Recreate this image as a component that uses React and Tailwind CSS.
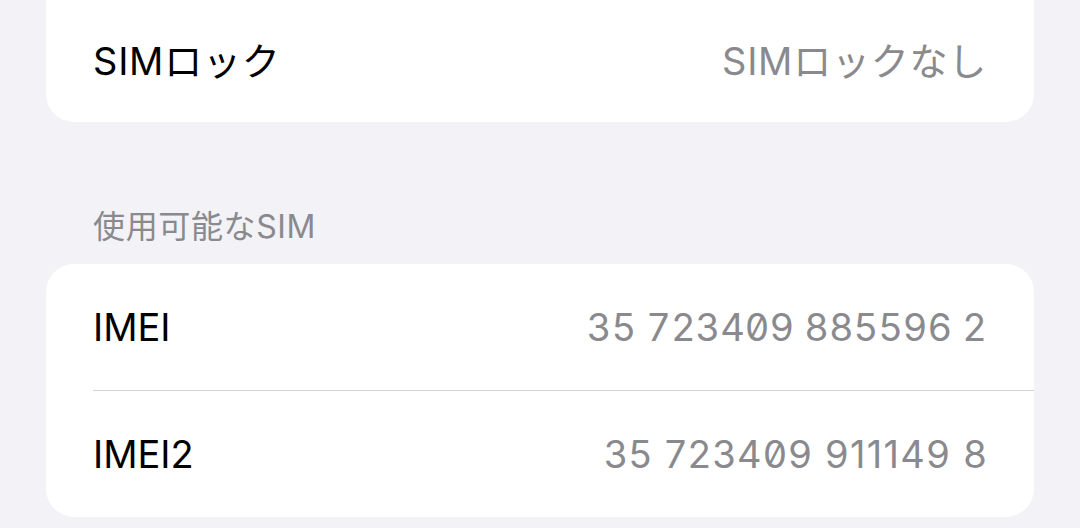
export default function App() {
  const font = "font-['Inter','Noto_Sans_CJK_JP',sans-serif]"
  return (
    <div className={`w-[1080px] h-[528px] overflow-hidden bg-[#f2f2f7] ${font}`}>
      <div className="mx-[46px] h-[122px] bg-white rounded-b-[28px] flex items-center justify-between px-[47px]">
        <span className="text-[38px] text-black tracking-[0.02em]">SIMロック</span>
        <span className="text-[38px] text-[#8a8a8e] tracking-[0.02em]">SIMロックなし</span>
      </div>
      <div className="pl-[93px] pt-[86px] pb-[18px] text-[32px] leading-[38px] text-[#8a8a8e] tracking-[0.02em]">使用可能なSIM</div>
      <div className="mx-[46px] bg-white rounded-[28px]">
        <div className="h-[126px] flex items-center justify-between px-[47px]">
          <span className="text-[38px] text-black">IMEI</span>
          <span className="text-[38px] text-[#8a8a8e] tabular-nums slashed-zero">35 723409 885596 2</span>
        </div>
        <div className="ml-[47px] h-px bg-[#d1d1d6]"></div>
        <div className="h-[126px] flex items-center justify-between px-[47px]">
          <span className="text-[38px] text-black">IMEI2</span>
          <span className="text-[38px] text-[#8a8a8e] slashed-zero tracking-[0.035em] -mr-[1px]">35 723409 911149 8</span>
        </div>
      </div>
    </div>
  )
}
